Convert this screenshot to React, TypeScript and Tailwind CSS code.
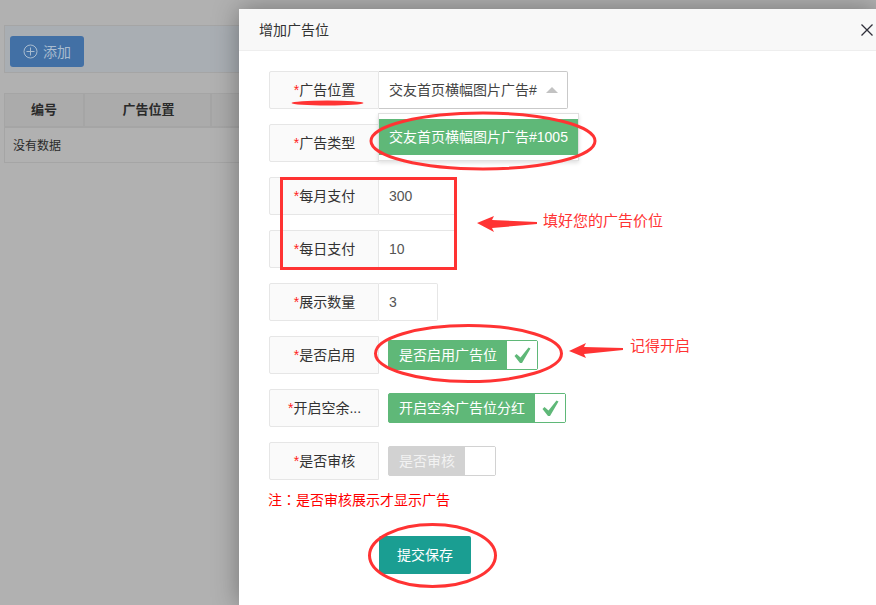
import React from "react";

const font = { fontFamily: '"Liberation Sans", "Noto Sans CJK SC", sans-serif' };

function Label({ text }: { text: string }) {
  return (
    <div className="flex h-[38px] w-[110px] shrink-0 items-center justify-center rounded-l-[2px] border border-[#e6e6e6] bg-[#fafafa] pl-[1px] text-[14px] text-[#333]">
      <span className="text-[#ff2222]">*</span>
      {text}
    </div>
  );
}

function InputRow({ label, value, w }: { label: string; value: string; w: string }) {
  return (
    <div className="mb-[15px] flex">
      <Label text={label} />
      <div className={`flex h-[38px] items-center rounded-r-[2px] border border-l-0 border-[#e6e6e6] pl-[10px] text-[14px] text-[#555] ${w}`}>
        {value}
      </div>
    </div>
  );
}

function Check() {
  return (
    <svg width="17" height="17" viewBox="0 0 17 17">
      <polygon points="0.5,9 2.5,7 6.5,10.5 14.500,0.500 16.500,1.500 8,16 6,16" fill="#5fb878" />
    </svg>
  );
}

function SwitchRow({ label, text, on, w }: { label: string; text: string; on: boolean; w: string }) {
  return (
    <div className="mb-[15px] flex">
      <Label text={label} />
      <div className="ml-[9px] flex h-[38px] items-center">
        <div className={`flex h-[30px] items-stretch rounded-[2px] border ${on ? "border-[#5fb878] bg-[#5fb878]" : "border-[#d2d2d2] bg-[#d2d2d2]"} ${w}`}>
          <div className={`flex flex-1 items-center pl-[10px] text-[14px] ${on ? "text-white" : "text-[#f2f2f2]"}`}>{text}</div>
          <div className="flex w-[30px] items-center justify-center bg-white">{on && <Check />}</div>
        </div>
      </div>
    </div>
  );
}

function Annotations() {
  return (
    <svg className="pointer-events-none absolute left-0 top-0" width="876" height="605" viewBox="0 0 876 605">
      <g fill="none" stroke="#ff3333" strokeWidth="3">
        <ellipse cx="483" cy="141" rx="112" ry="28" />
        <ellipse cx="468.500" cy="353.500" rx="93" ry="28" />
        <ellipse cx="432.500" cy="555.500" rx="63" ry="31" />
        <rect x="281.500" y="178.500" width="174" height="90" />
      </g>
      <ellipse cx="327.500" cy="103" rx="36" ry="2.500" fill="#ff3333" />
      <polygon points="477,223 494,216 492,220 537,222 537,224 492,228 494,232" fill="#ff3333" />
      <polygon points="569,351 586,343 584,347 623,348 623,350 584,354 586,358" fill="#ff3333" />
    </svg>
  );
}

export default function App() {
  return (
    <div className="relative h-[605px] w-[876px] overflow-hidden bg-[#b1b1b1]" style={font}>
      {/* dimmed page */}
      <div className="px-[4px] pt-[25px]">
        <div className="flex h-[48px] items-start border border-[#a5a5a5] bg-[#a9aeb3] pl-[5px] pt-[10px]">
          <div className="flex h-[31px] w-[74px] items-center justify-center gap-[5px] rounded-[3px] bg-[#4270a5] text-[14px] text-[#a9bccf]">
            <svg width="15" height="15" viewBox="0 0 15 15" fill="none" stroke="#a9bccf" strokeWidth="1">
              <circle cx="7.500" cy="7.500" r="6.500" />
              <path d="M7.500 3.500v8M3.500 7.500h8" />
            </svg>
            <span className="pt-[1px]">添加</span>
          </div>
        </div>
        <div className="mt-[20px] w-[300px] border border-[#a5a5a5] text-[#2a2a2a]">
          <div className="flex h-[34px] border-b-[2px] border-[#a5a5a5] bg-[#ababab] text-[13px] font-bold">
            <div className="flex w-[80px] items-center justify-center border-r-[2px] border-[#a5a5a5]">编号</div>
            <div className="flex w-[127px] items-center justify-center border-r-[2px] border-[#a5a5a5] pl-[2px]">广告位置</div>
          </div>
          <div className="flex h-[34px] items-center pl-[8px] pt-[2px] text-[12px]">没有数据</div>
        </div>
      </div>

      {/* modal */}
      <div className="absolute left-[239px] top-[9px] h-[596px] w-[637px] bg-white shadow-[0_0_24px_rgba(0,0,0,0.35)]">
        <div className="flex h-[42px] items-center justify-between border-b border-[#eeeeee] bg-[#f8f8f8] pl-[20px] pr-[3px] text-[14px] text-[#333]">
          <span className="pt-[2px]">增加广告位</span>
          <svg width="12" height="12" viewBox="0 0 12 12" stroke="#2f2f3a" strokeWidth="1.300">
            <path d="M0.500 0.500l11 11M11.500 0.500l-11 11" />
          </svg>
        </div>
        <div className="relative pl-[30px] pt-[20px]">
          {/* select */}
          <div className="mb-[15px] flex">
            <Label text="广告位置" />
            <div className="flex h-[38px] w-[189px] items-center justify-between rounded-r-[2px] border border-l-0 border-[#c9c9c9] pl-[10px] pr-[9px] text-[14px] text-[#444]">
              <span>交友首页横幅图片广告#</span>
              <span className="h-0 w-0 border-x-[6px] border-b-[6px] border-x-transparent border-b-[#c2c2c2]" />
            </div>
          </div>
          <div className="mb-[15px] flex">
            <Label text="广告类型" />
          </div>
          <div className="absolute left-[139px] top-[62px] h-[48px] w-[201px] border border-[#e0e0e0] bg-white pt-[5px] shadow-[0_2px_4px_rgba(0,0,0,0.12)]">
            <div className="flex h-[36px] items-center whitespace-nowrap bg-[#5fb878] pl-[10px] text-[14px] text-white">
              交友首页横幅图片广告#1005
            </div>
          </div>

          <InputRow label="每月支付" value="300" w="w-[78px]" />
          <InputRow label="每日支付" value="10" w="w-[78px]" />
          <InputRow label="展示数量" value="3" w="w-[59px]" />
          <SwitchRow label="是否启用" text="是否启用广告位" on w="w-[150px]" />
          <SwitchRow label="开启空余..." text="开启空余广告位分红" on w="w-[178px]" />
          <SwitchRow label="是否审核" text="是否审核" on={false} w="w-[108px]" />

          <div className="-ml-[1px] -mt-[6px] text-[14px] leading-[20px] text-[#ff0000]">
            注<span className="font-['Noto_Sans_CJK_TC']">：</span>是否审核展示才显示广告
          </div>
          <div className="ml-[110px] mt-[26px] flex h-[38px] w-[92px] items-center justify-center rounded-[2px] bg-[#1a9e92] text-[14px] text-white">
            提交保存
          </div>
        </div>
      </div>

      <Annotations />
      <div className="absolute left-[543px] top-[210px] text-[15px] leading-[22px] text-[#ff3333]">填好您的广告价位</div>
      <div className="absolute left-[630px] top-[335px] text-[15px] leading-[22px] text-[#ff3333]">记得开启</div>
    </div>
  );
}
